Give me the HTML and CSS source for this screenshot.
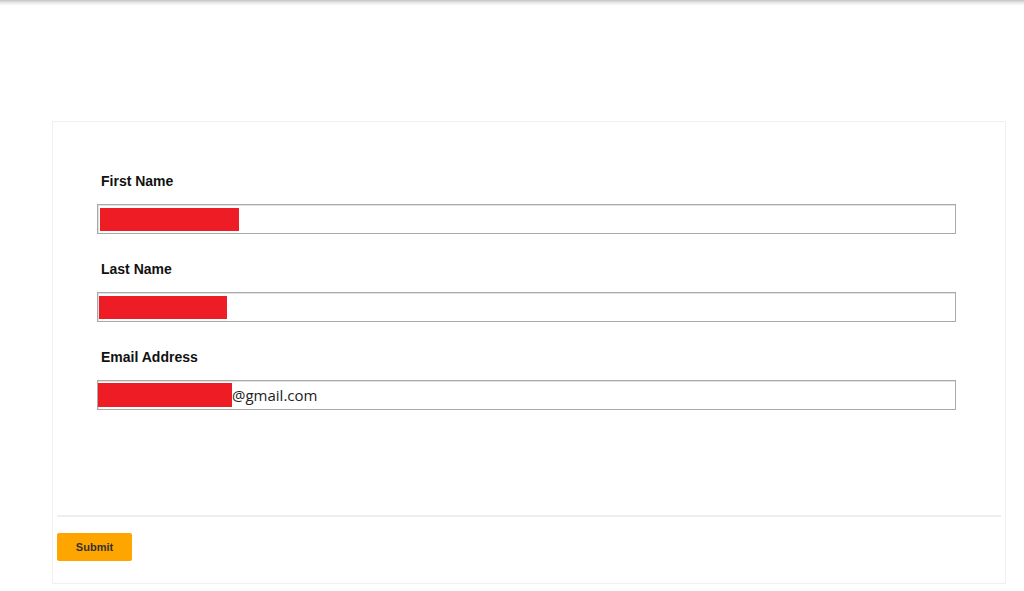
FILE: index.html
```html
<!DOCTYPE html>
<html lang="en">
  <head>
    <meta charset="UTF-8" />
    <meta name="viewport" content="width=device-width, initial-scale=1.0" />
    <title>Sign up</title>
    <link rel="stylesheet" href="styles.css">
  </head>
  <body>
    <div class="top-shadow"></div>

    <div class="card">
      <div class="fields">
        <div class="field">
          <label>First Name</label>
          <div class="input-box">
            <span class="redact redact-first"></span>
          </div>
        </div>

        <div class="field">
          <label>Last Name</label>
          <div class="input-box">
            <span class="redact redact-last"></span>
          </div>
        </div>

        <div class="field">
          <label>Email Address</label>
          <div class="input-box">
            <span class="redact redact-email"></span><span class="value">@gmail.com</span>
          </div>
        </div>
      </div>

      <div class="actions">
        <button>Submit</button>
      </div>
    </div>
  </body>
</html>
```

FILE: styles.css
```css
body {
  margin: 0;
  background: #fff;
  font-family: "Liberation Sans", Arial, sans-serif;
}
.top-shadow {
  height: 6px;
  background: linear-gradient(#c4c4c4, #ececec 50%, #fff);
}
.card {
  margin: 115px 18px 0 52px;
  border: 1px solid #f0f0f0;
  padding: 0 4px 22px 4px;
}
.fields {
  padding: 51px 45px 105px 40px;
  border-bottom: 2px solid #eee;
}
.field {
  margin-bottom: 27px;
}
.field:last-child {
  margin-bottom: 0;
}
label {
  display: block;
  font-size: 14px;
  font-weight: bold;
  line-height: 16px;
  color: #111;
  padding-left: 4px;
  margin-bottom: 15px;
}
.input-box {
  height: 28px;
  border: 1px solid #a9a9a9;
  box-shadow: inset 1px 1px 0 #e2e2e2;
  display: flex;
  align-items: center;
}
.redact {
  display: inline-block;
  background: #ee1c25;
  height: 23px;
}
.redact-first {
  width: 139px;
  margin-left: 2px;
}
.redact-last {
  width: 128px;
  margin-left: 1px;
}
.redact-email {
  width: 134px;
  height: 24px;
}
.value {
  font-family: "Open Sans", sans-serif;
  font-size: 15px;
  color: #222;
}
.actions {
  padding-top: 16px;
}
button {
  background: #ffa500;
  color: #333;
  border: none;
  border-radius: 2px;
  width: 75px;
  height: 28px;
  font-family: "Liberation Sans", Arial, sans-serif;
  font-size: 11px;
  font-weight: bold;
  cursor: pointer;
}
```
